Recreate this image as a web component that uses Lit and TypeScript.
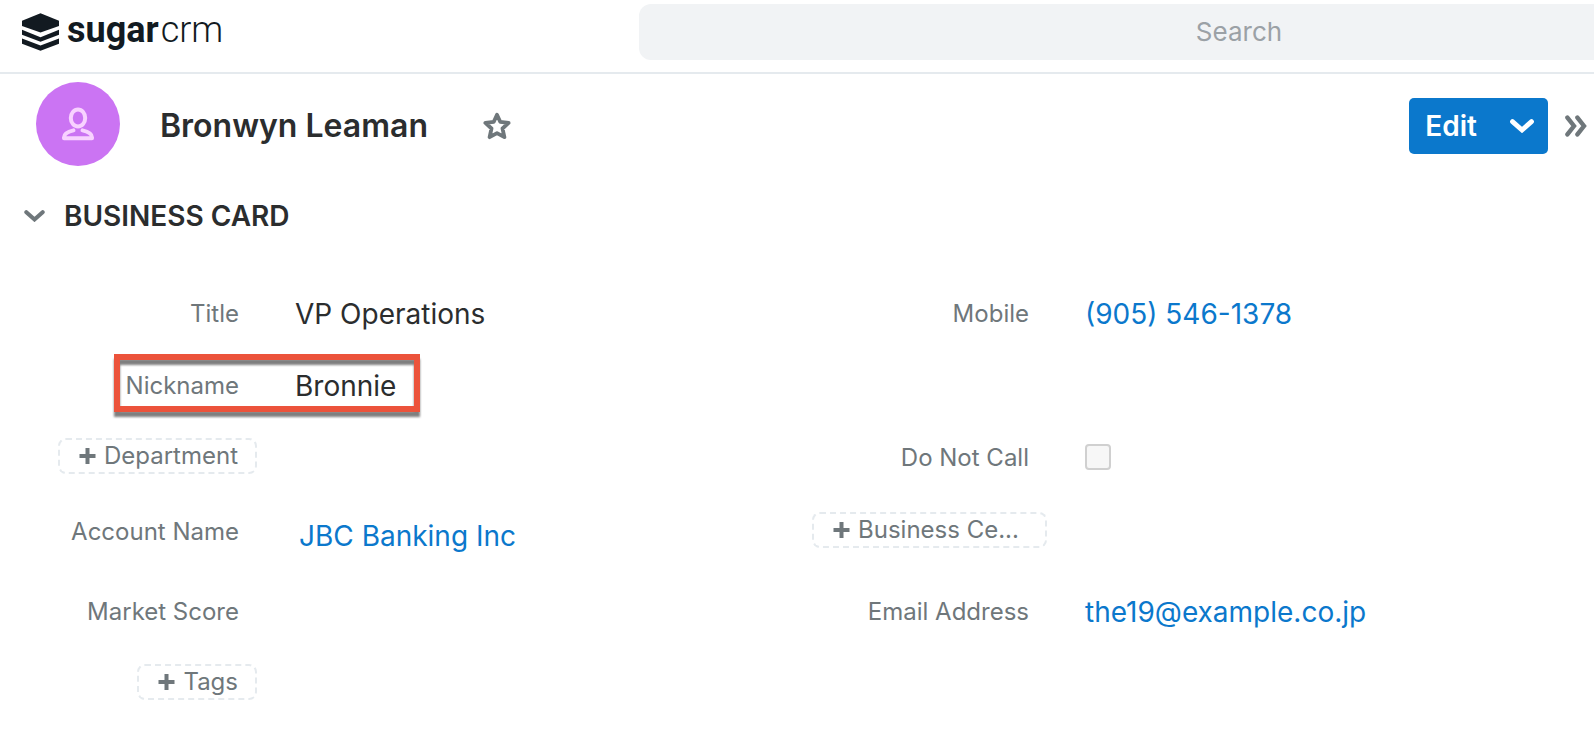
import { LitElement, html, css, nothing, TemplateResult } from "lit";
import { customElement } from "lit/decorators.js";
import { classMap } from "lit/directives/class-map.js";

interface Field {
  label: string;
  kind: "text" | "link" | "relate" | "check" | "empty" | "add";
  value?: string;
  href?: string;
  marked?: boolean;
  wide?: boolean;
}

const ROWS: (Field | null)[][] = [
  [
    { label: "Title", kind: "text", value: "VP Operations" },
    { label: "Mobile", kind: "link", value: "(905) 546-1378", href: "tel:9055461378" },
  ],
  [{ label: "Nickname", kind: "text", value: "Bronnie", marked: true }, null],
  [
    { label: "Department", kind: "add" },
    { label: "Do Not Call", kind: "check" },
  ],
  [
    { label: "Account Name", kind: "relate", value: "JBC Banking Inc", href: "#account" },
    { label: "Business Ce...", kind: "add", wide: true },
  ],
  [
    { label: "Market Score", kind: "empty" },
    { label: "Email Address", kind: "link", value: "the19@example.co.jp", href: "mailto:the19@example.co.jp" },
  ],
  [{ label: "Tags", kind: "add" }, null],
];

const chevronDown = (width: number, height: number) => html`
  <svg width=${width} height=${height} viewBox="0 0 24 14" aria-hidden="true">
    <path d="M2.5 2.6 12 11 21.5 2.6" fill="none" stroke="currentColor" stroke-width="4.8"
      stroke-linecap="round" stroke-linejoin="miter" />
  </svg>`;

@customElement("app-header")
export class AppHeader extends LitElement {
  static styles = css`
    :host {
      display: block;
    }
    .bar {
      display: flex;
      align-items: flex-start;
      height: 72px;
      border-bottom: 2px solid #e5eaee;
    }
    .brand {
      display: flex;
      align-items: center;
      flex: none;
      gap: 8px;
      width: 617px;
      padding: 8px 0 0 22px;
      color: #121a21;
      font: 700 36px/44px Roboto, sans-serif;
      text-decoration: none;
    }
    .thin {
      margin-left: 2px;
      font-weight: 300;
    }
    .mark {
      margin-top: 4px;
    }
    .search {
      flex: 1;
      box-sizing: border-box;
      min-width: 0;
      height: 56px;
      margin: 4px -245px 0 0;
      padding: 0 0 2px;
      border: 0;
      border-radius: 12px;
      background: #f1f3f5;
      color: #2b2d2e;
      font: 400 26px/36px Inter, sans-serif;
      text-align: center;
    }
    .search::placeholder {
      color: #9ba1a6;
      opacity: 1;
    }
  `;

  render() {
    return html`
      <header class="bar">
        <a class="brand" href="#home">
          <svg class="mark" width="37" height="38" viewBox="0 0 37 38" fill="currentColor" aria-hidden="true">
            <path d="M18.5 0.2 37 7.8V13L18.5 19.4 0 13V7.8Z" />
            <path d="M0 16.8 18.5 24.2 37 16.8V21.8L18.5 28.8 0 21.8Z" />
            <path d="M0 25.6 18.5 32.6 37 25.6V30.7L18.5 37.8 0 30.7Z" />
          </svg>
          <span>sugar<span class="thin">crm</span></span>
        </a>
        <input class="search" type="text" placeholder="Search" aria-label="Search" />
      </header>
    `;
  }
}

@customElement("record-title")
export class RecordTitle extends LitElement {
  static styles = css`
    :host {
      display: block;
    }
    .row {
      display: flex;
      align-items: center;
      padding: 8px 4px 0 36px;
    }
    .avatar {
      display: grid;
      place-items: center;
      flex: none;
      width: 84px;
      height: 84px;
      border-radius: 50%;
      background: #cb74f3;
      color: #f8d2ff;
    }
    .name {
      margin: 4px 0 0 40px;
      color: #2b2d2e;
      font: 600 32px/40px Inter, sans-serif;
    }
    .plain {
      display: grid;
      place-items: center;
      margin-top: 4px;
      padding: 0;
      border: 0;
      background: none;
      color: #6f777b;
    }
    .star {
      margin-left: 55px;
    }
    .actions {
      display: flex;
      height: 56px;
      margin: 4px 14px 0 auto;
      border-radius: 5px;
      background: #0b78cc;
      overflow: hidden;
    }
    .edit,
    .more {
      border: 0;
      background: none;
      color: #fff;
      font: 600 28px/36px Inter, sans-serif;
    }
    .edit {
      padding: 0 17px 0 16px;
    }
    .more {
      display: grid;
      place-items: center;
      padding: 0 14px 0 16px;
    }
    .expand {
      width: 28px;
      height: 36px;
    }
  `;

  render() {
    return html`
      <div class="row">
        <div class="avatar">
          <svg width="34" height="34" viewBox="0 0 34 34" fill="none" stroke="currentColor" stroke-width="4"
            stroke-linejoin="round" aria-hidden="true">
            <ellipse cx="17" cy="11" rx="7.2" ry="8.4" />
            <path d="M12.5 23.4C8 24.4 3 26 3 30.4V31.2H31V30.4C31 26 26 24.4 21.5 23.4" stroke-linecap="round" />
          </svg>
        </div>
        <h1 class="name">Bronwyn Leaman</h1>
        <button class="plain star" aria-label="Favorite">
          <svg width="28" height="28" viewBox="0 0 28 28" aria-hidden="true">
            <path d="M14 2.8 17.2 9.8 25.6 10.9 19.5 16.5 21.4 25.2 14 21.2 6.6 25.2 8.5 16.5 2.4 10.9 10.8 9.8Z"
              fill="none" stroke="currentColor" stroke-width="3.8" stroke-linejoin="round" />
          </svg>
        </button>
        <div class="actions">
          <button class="edit">Edit</button>
          <button class="more" aria-label="More actions">${chevronDown(24, 14)}</button>
        </div>
        <button class="plain expand" aria-label="Open side pane">
          <svg width="22" height="22" viewBox="0 0 22 22" fill="none" stroke="currentColor" stroke-width="4.4"
            stroke-linecap="round" aria-hidden="true">
            <path d="M2.4 2.6 9 11 2.4 19.4M12.4 2.6 19 11 12.4 19.4" />
          </svg>
        </button>
      </div>
    `;
  }
}

@customElement("record-field")
export class RecordField extends LitElement {
  static properties = { field: { attribute: false } };
  declare field: Field;

  static styles = css`
    :host {
      display: block;
    }
    .cell {
      display: grid;
      grid-template-columns: 257px minmax(0, 1fr);
      align-items: start;
      position: relative;
    }
    .label {
      padding: 2px 18px 0 0;
      color: #6f777b;
      font: 400 24px/36px Inter, sans-serif;
      text-align: right;
    }
    .value {
      padding: 2px 0 0 38px;
      color: #2b2d2e;
      font: 400 28px/36px Inter, sans-serif;
    }
    .link {
      color: #0b78cc;
      text-decoration: none;
    }
    .relate {
      display: block;
      padding: 4px;
    }
    .check {
      display: block;
      appearance: none;
      box-sizing: border-box;
      width: 26px;
      height: 26px;
      margin: 4px 0 8px;
      border: 2px solid #d0d0d0;
      border-radius: 4px;
      background: #f7f7f7;
    }
    .add {
      display: flex;
      align-items: center;
      justify-self: end;
      gap: 8px;
      box-sizing: border-box;
      height: 36px;
      padding: 0 17px 0 19px;
      border: 2px dashed #e5eaee;
      border-radius: 8px;
      background: none;
      color: #6f777b;
      font: 400 24px/32px Inter, sans-serif;
      white-space: nowrap;
    }
    .wide {
      width: 235px;
    }
    .frame {
      position: absolute;
      top: -12px;
      left: 114px;
      box-sizing: border-box;
      width: 306px;
      height: 58px;
      border: 6px solid #ec533b;
      filter: drop-shadow(0 5px 1px rgba(0, 0, 0, 0.5));
      pointer-events: none;
    }
  `;

  private renderValue(f: Field): TemplateResult | string | typeof nothing {
    switch (f.kind) {
      case "link":
        return html`<a class="link" href=${f.href!}>${f.value}</a>`;
      case "relate":
        return html`<a class="link relate" href=${f.href!}>${f.value}</a>`;
      case "check":
        return html`<input class="check" id="box" type="checkbox" />`;
      case "text":
        return f.value!;
      default:
        return nothing;
    }
  }

  render() {
    const f = this.field;
    if (f.kind === "add") {
      return html`
        <div class="cell">
          <button class=${classMap({ add: true, wide: !!f.wide })}>
            <svg width="17" height="16" viewBox="0 0 17 16" aria-hidden="true">
              <path d="M8.5 0V16M0.5 8H16.5" stroke="currentColor" stroke-width="4" />
            </svg>
            <span>${f.label}</span>
          </button>
        </div>
      `;
    }
    return html`
      <div class="cell">
        ${f.kind === "check"
          ? html`<label class="label" for="box">${f.label}</label>`
          : html`<span class="label">${f.label}</span>`}
        <div class="value">${this.renderValue(f)}</div>
        ${f.marked ? html`<div class="frame"></div>` : nothing}
      </div>
    `;
  }
}

@customElement("app-root")
export class AppRoot extends LitElement {
  static styles = css`
    :host {
      display: block;
      min-height: 100vh;
      overflow: hidden;
      background: #fff;
      font-family: Inter, sans-serif;
    }
    .panel {
      padding: 32px 14px 36px 0;
    }
    .heading {
      margin: 0;
    }
    .toggle {
      display: flex;
      align-items: center;
      gap: 19px;
      padding: 0 0 0 24px;
      border: 0;
      background: none;
      color: #2b2d2e;
      font: 600 28px/36px Inter, sans-serif;
    }
    .caret {
      display: flex;
      color: #6f777b;
    }
    .fields {
      display: grid;
      grid-template-columns: 1fr 1fr;
      row-gap: 34px;
      padding-top: 60px;
    }
  `;

  render() {
    return html`
      <app-header></app-header>
      <main>
        <record-title></record-title>
        <section class="panel">
          <h2 class="heading">
            <button class="toggle" aria-expanded="true">
              <span class="caret">${chevronDown(21, 12)}</span>BUSINESS CARD
            </button>
          </h2>
          <div class="fields">
            ${ROWS.map((row) =>
              row.map((f) => (f ? html`<record-field .field=${f}></record-field>` : html`<div></div>`))
            )}
          </div>
        </section>
      </main>
    `;
  }
}
